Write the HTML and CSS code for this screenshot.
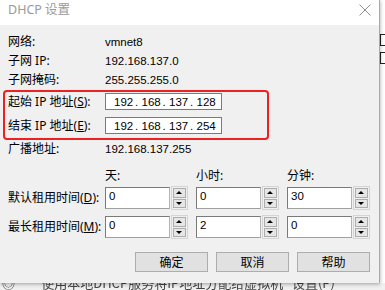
FILE: index.html
```html
<!DOCTYPE html>
<html lang="zh-CN">
<head>
    <meta charset="UTF-8">
    <meta name="viewport" content="width=device-width, initial-scale=1.0">
    <title>DHCP 设置</title>
    <link rel="stylesheet" href="styles.css">
</head>
<body>
    <div class="screen">
        <div class="top">
            <div class="dialog">
                <div class="titlebar">
                    <span class="title">DHCP 设置</span>
                    <svg class="close" width="12" height="12" viewBox="0 0 12 12">
                        <path d="M0.5 0.5 L11.5 11.5 M11.5 0.5 L0.5 11.5" stroke="#8c8c8c" stroke-width="1" fill="none"/>
                    </svg>
                </div>
                <div class="content">
                    <div class="info-row">
                        <span class="label">网络:</span>
                        <span class="value">vmnet8</span>
                    </div>
                    <div class="info-row">
                        <span class="label">子网 IP:</span>
                        <span class="value">192.168.137.0</span>
                    </div>
                    <div class="info-row">
                        <span class="label">子网掩码:</span>
                        <span class="value">255.255.255.0</span>
                    </div>

                    <div class="range-box">
                        <div class="ip-row">
                            <label class="label">起始 IP 地址(<u>S</u>):</label>
                            <div class="ip-field">
                                <span class="octet">192</span><span class="dot">.</span>
                                <span class="octet">168</span><span class="dot">.</span>
                                <span class="octet">137</span><span class="dot">.</span>
                                <span class="octet">128</span>
                            </div>
                        </div>
                        <div class="ip-row">
                            <label class="label">结束 IP 地址(<u>E</u>):</label>
                            <div class="ip-field">
                                <span class="octet">192</span><span class="dot">.</span>
                                <span class="octet">168</span><span class="dot">.</span>
                                <span class="octet">137</span><span class="dot">.</span>
                                <span class="octet">254</span>
                            </div>
                        </div>
                    </div>

                    <div class="info-row broadcast">
                        <span class="label">广播地址:</span>
                        <span class="value">192.168.137.255</span>
                    </div>

                    <div class="lease-head">
                        <span class="label"></span>
                        <span class="col-title">天:</span>
                        <span class="col-title">小时:</span>
                        <span class="col-title">分钟:</span>
                    </div>
                    <div class="lease-row">
                        <label class="label">默认租用时间(<u>D</u>):</label>
                        <div class="spin-group"><div class="spin-field">0</div><div class="spin"><span class="up"></span><span class="down"></span></div></div>
                        <div class="spin-group"><div class="spin-field">0</div><div class="spin"><span class="up"></span><span class="down"></span></div></div>
                        <div class="spin-group"><div class="spin-field">30</div><div class="spin"><span class="up"></span><span class="down"></span></div></div>
                    </div>
                    <div class="lease-row second">
                        <label class="label">最长租用时间(<u>M</u>):</label>
                        <div class="spin-group"><div class="spin-field">0</div><div class="spin"><span class="up"></span><span class="down"></span></div></div>
                        <div class="spin-group"><div class="spin-field">2</div><div class="spin"><span class="up"></span><span class="down"></span></div></div>
                        <div class="spin-group"><div class="spin-field">0</div><div class="spin"><span class="up"></span><span class="down"></span></div></div>
                    </div>

                    <div class="buttons">
                        <button class="btn">确定</button>
                        <button class="btn">取消</button>
                        <button class="btn">帮助</button>
                    </div>
                </div>
            </div>
            <div class="side-strip">
                <span class="mark first"></span>
                <span class="mark"></span>
            </div>
        </div>
        <div class="behind">
            <span class="behind-text">◎ &nbsp; &nbsp; &nbsp; &nbsp; 使用本地DHCP服务将IP地址分配给虚拟机 &nbsp; 设置(P)</span>
        </div>
    </div>
</body>
</html>
```

FILE: styles.css
```css
body {
    margin: 0;
    background: #f0f0f0;
    font-family: "Noto Sans", "Noto Sans CJK SC", sans-serif;
    font-size: 12px;
    color: #000;
    overflow: hidden;
}
.screen {
    width: 385px;
    height: 290px;
}
.top {
    display: flex;
    height: 283px;
}
.dialog {
    position: relative;
    z-index: 1;
    width: 380px;
    height: 283px;
    background: #f0f0f0;
    border-right: 1px solid #a8a8a8;
    box-shadow: 0 1px 4px rgba(0, 0, 0, 0.35);
}
.titlebar {
    height: 25px;
    background: #fff;
    display: flex;
    justify-content: space-between;
    align-items: flex-start;
}
.title {
    margin: 2px 0 0 8px;
    line-height: 16px;
    font-size: 12.5px;
    color: #9a9a9a;
}
.close {
    margin: 4px 8px 0 0;
}
.content {
    padding: 7px 0 0 8px;
}
.label {
    width: 97px;
    flex-shrink: 0;
    line-height: 16px;
    white-space: nowrap;
}
.label u {
    text-underline-offset: 1px;
}
.info-row {
    display: flex;
    align-items: center;
    height: 19px;
}
.value {
    font-family: "Liberation Sans", sans-serif;
    font-size: 11.5px;
}
.range-box {
    width: 259px;
    margin: 1px 0 0 -5px;
    padding: 1px 0 4px 3px;
    border: 2px solid #ee2020;
    border-radius: 4px;
}
.ip-row {
    display: flex;
    align-items: center;
    height: 17px;
}
.ip-row + .ip-row {
    margin-top: 7px;
}
.ip-field {
    width: 107px;
    height: 15px;
    padding-left: 8px;
    background: #fff;
    border: 1px solid #7a7a7a;
    display: flex;
    align-items: center;
    font-family: "Liberation Sans", sans-serif;
    font-size: 11.5px;
}
.octet {
    width: 21px;
}
.dot {
    width: 6.5px;
}
.broadcast {
    height: 17px;
}
.lease-head {
    display: flex;
    gap: 8px;
    margin-top: 10px;
    height: 18px;
    align-items: center;
}
.lease-head .label {
    width: 89px;
}
.col-title {
    width: 83px;
    line-height: 16px;
}
.lease-row {
    display: flex;
    gap: 8px;
    align-items: center;
    margin-top: 2px;
    height: 22px;
}
.lease-row.second {
    margin-top: 7px;
}
.lease-row .label {
    width: 89px;
}
.spin-group {
    display: flex;
    gap: 1px;
    width: 83px;
    height: 22px;
}
.spin-field {
    width: 62px;
    height: 20px;
    padding-left: 3px;
    background: #fff;
    border: 1px solid #7a7a7a;
    border-right-color: #b4b4b4;
    border-bottom-color: #a0a0a0;
    font-family: "Liberation Sans", sans-serif;
    font-size: 11.5px;
    line-height: 16px;
}
.spin {
    width: 14px;
    height: 20px;
    padding: 1px;
    border: 1px solid #d4d4d4;
    box-sizing: content-box;
    margin-top: -1px;
    display: flex;
    flex-direction: column;
    gap: 1px;
}
.spin span {
    flex: 1;
    background: #e6e6e6;
    border: 1px solid #adadad;
    display: flex;
    align-items: center;
    justify-content: center;
}
.spin .up::before {
    content: "";
    border-left: 3px solid transparent;
    border-right: 3px solid transparent;
    border-bottom: 3px solid #000;
}
.spin .down::before {
    content: "";
    border-left: 3px solid transparent;
    border-right: 3px solid transparent;
    border-top: 3px solid #000;
}
.buttons {
    display: flex;
    justify-content: flex-end;
    gap: 8px;
    margin-top: 14px;
    padding-right: 9px;
}
.btn {
    width: 73px;
    height: 20px;
    padding: 0;
    background: #e1e1e1;
    border: 1px solid #adadad;
    font-family: "Noto Sans CJK SC", sans-serif;
    font-size: 12px;
    line-height: 16px;
    color: #000;
}
.side-strip {
    flex: 1;
    background: #fff;
    display: flex;
    flex-direction: column;
    gap: 6px;
    padding-top: 34px;
}
.mark {
    width: 4px;
    height: 10px;
    border: 1px solid #222;
    border-right: none;
}
.behind {
    height: 7px;
    overflow: hidden;
}
.behind-text {
    display: block;
    margin-top: -7px;
    padding-left: 2px;
    font-family: "Noto Sans CJK SC", sans-serif;
    font-size: 13px;
    line-height: 14px;
    color: #444;
    filter: blur(0.4px);
}
```
